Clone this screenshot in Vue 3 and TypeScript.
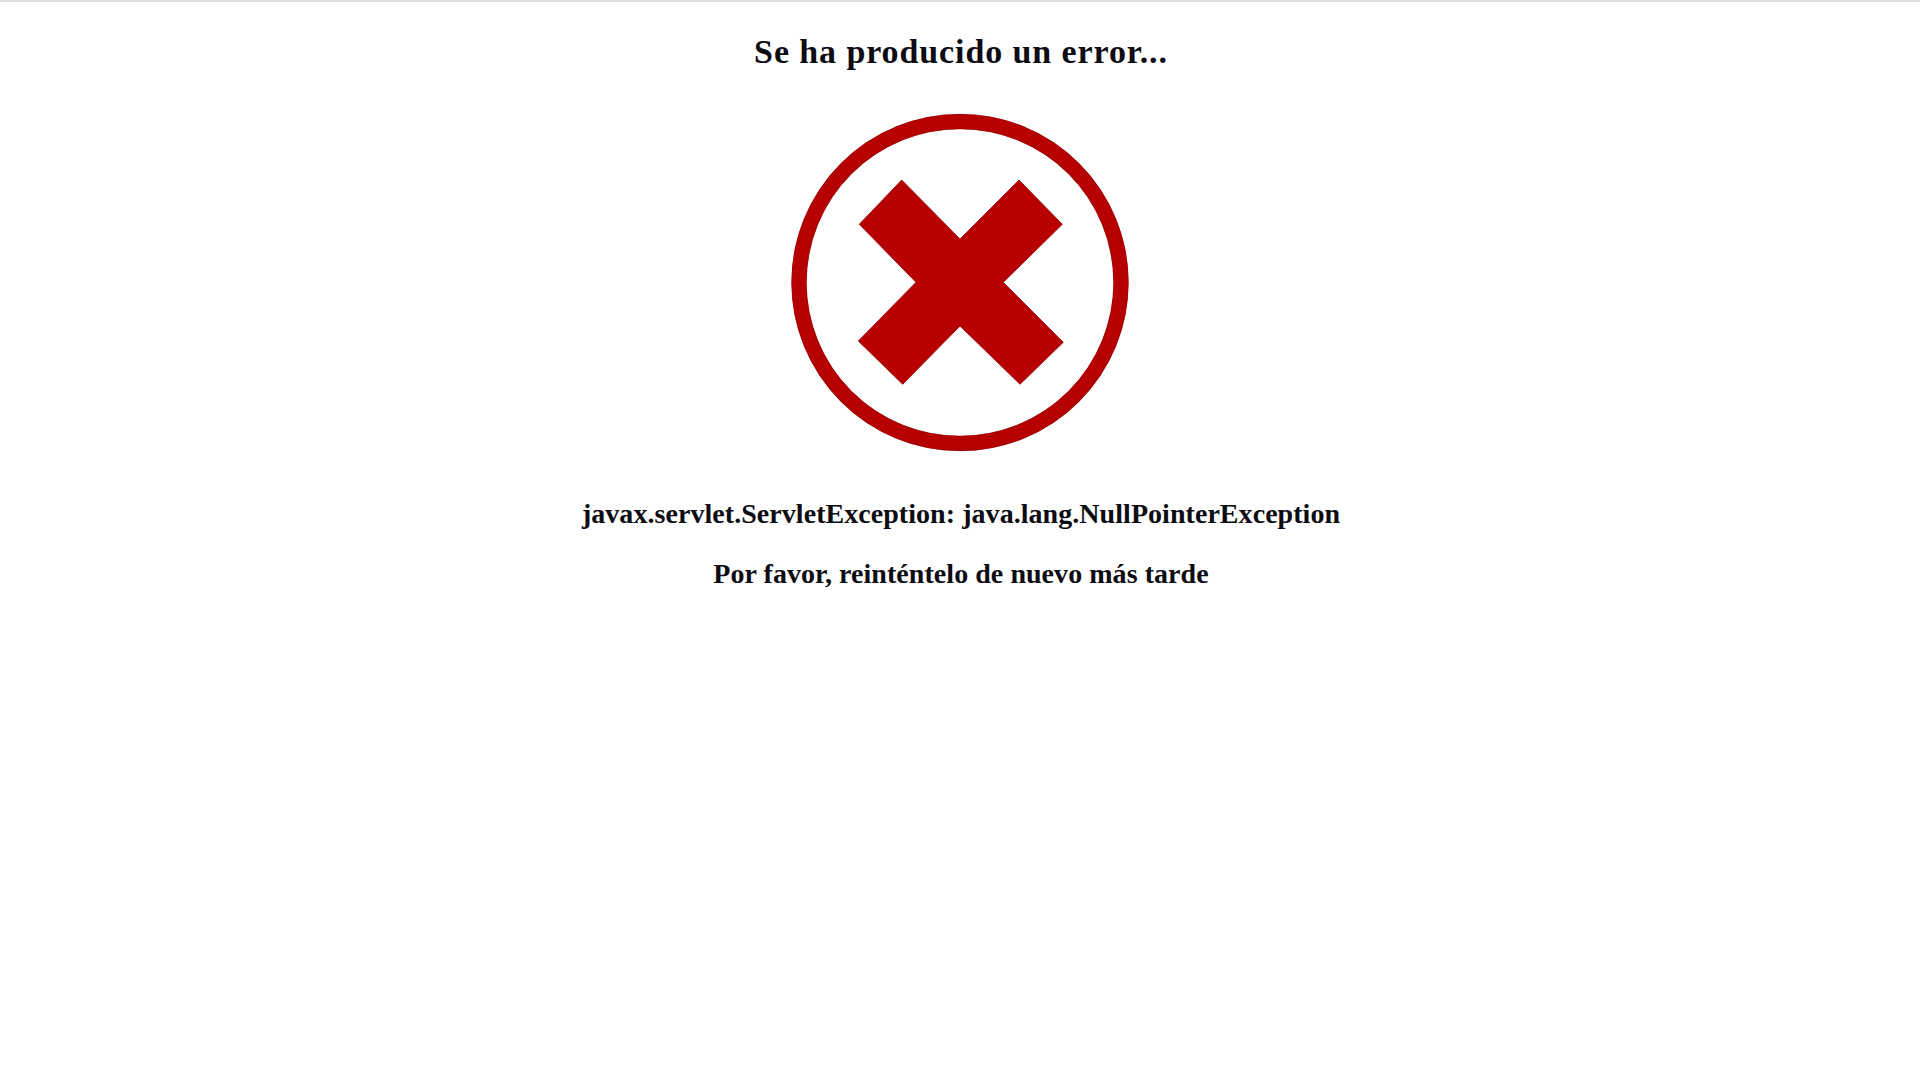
<script setup lang="ts">
const title: string = 'Se ha producido un error...'
const detail: string = 'javax.servlet.ServletException: java.lang.NullPointerException'
const retry: string = 'Por favor, reinténtelo de nuevo más tarde'
</script>

<template>
  <main class="page">
    <h1 class="title">{{ title }}</h1>
    <svg class="icon" viewBox="0 0 340 340" width="340" height="340" aria-hidden="true">
      <circle cx="170" cy="170.5" r="161" fill="none" stroke="#b60000" stroke-width="15" />
      <circle cx="170" cy="170.5" r="168.2" fill="none" stroke="#980000" stroke-width="0.7" />
      <circle cx="170" cy="170.5" r="153.8" fill="none" stroke="#980000" stroke-width="0.7" />
      <polygon
        points="111.7,68 69.3,112.3 126,170.3 68.3,229 112.7,272.3 170,214 230,272.3 273.3,230.3 213.3,170.3 272.3,112.3 229,68 170,127"
        fill="#b80000"
        stroke="#8f0000"
        stroke-width="0.8"
      />
    </svg>
    <p class="detail">{{ detail }}</p>
    <p class="retry">{{ retry }}</p>
  </main>
</template>

<style>
html, body { background: #ffffff; }
</style>

<style scoped>
.page {
  box-sizing: border-box;
  height: 1080px;
  display: flex;
  flex-direction: column;
  align-items: center;
  border-top: 2px solid #dedede;
  background: #ffffff;
  color: #0c0c12;
  font-family: "Liberation Serif", "Times New Roman", serif;
  font-weight: 700;
  overflow: hidden;
}
.title {
  margin: 30px 0 0;
  padding-left: 2px;
  font-size: 34px;
  line-height: 40px;
  letter-spacing: 0.9px;
  font-weight: 700;
}
.icon {
  display: block;
  margin-top: 40px;
}
.detail, .retry {
  margin: 0;
  padding-left: 2px;
  font-size: 28px;
  line-height: 32px;
  letter-spacing: 0.05px;
}
.detail { margin-top: 46px; }
.retry { margin-top: 28px; }
</style>
